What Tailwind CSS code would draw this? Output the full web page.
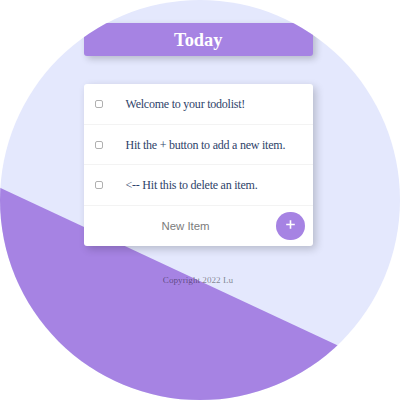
<!DOCTYPE html>
<html lang="en">
<head>
<meta charset="utf-8">
<title>Today</title>
<script src="https://cdn.jsdelivr.net/npm/@tailwindcss/browser@4"></script>
</head>
<body class="bg-white">
<main class="relative isolate flex h-[400px] w-[400px] flex-col items-start overflow-hidden rounded-full bg-[#e4e8fd] pt-[23px] pl-[84px] font-['Liberation_Serif',serif]">
  <div class="absolute inset-0 -z-10 bg-[#a683e3] [clip-path:polygon(0_187.8px,400px_374.4px,400px_400px,0_400px)]"></div>
  <header class="flex h-[33px] w-[228.6px] items-center justify-center rounded-[3px] bg-[#a683e3] shadow-[3px_3px_7px_rgba(0,0,0,0.2)]">
    <h1 class="pt-px text-[18.4px] leading-[32px] font-bold text-white">Today</h1>
  </header>
  <section class="mt-7 flex h-[162px] w-[228.6px] flex-col rounded-[3px] bg-white text-[12px] tracking-[-0.23px] text-[#2e4369] shadow-[3px_3px_8px_rgba(0,0,0,0.2)]">
    <label class="flex h-[41px] items-center border-b border-[#f3f3f3] pl-[11px]"><span class="mr-[22.5px] size-2 rounded-[2px] border border-[#b0b0b0]"></span><span class="whitespace-nowrap">Welcome to your todolist!</span></label>
    <label class="flex h-[40px] items-center border-b border-[#f3f3f3] pl-[11px]"><span class="mr-[22.5px] size-2 rounded-[2px] border border-[#b0b0b0]"></span><span class="pt-px whitespace-nowrap">Hit the + button to add a new item.</span></label>
    <label class="flex h-[41px] items-center border-b border-[#f3f3f3] pl-[11px]"><span class="mr-[22.5px] size-2 rounded-[2px] border border-[#b0b0b0]"></span><span class="whitespace-nowrap">&lt;-- Hit this to delete an item.</span></label>
    <div class="flex flex-1 items-center pr-[8px]">
      <span class="flex-1 pt-0.5 pl-[11px] text-center font-['Liberation_Sans',sans-serif] text-[11.4px] tracking-normal text-[#7b7b7b]">New Item</span>
      <button class="flex size-[28.5px] items-center justify-center rounded-full bg-[#a683e3]" aria-label="Add"><svg class="mb-[3px] size-[9px]" viewBox="0 0 9 9" fill="none" stroke="white" stroke-width="1.6"><path d="M4.5 0.2V8.8M0.2 4.5H8.8"/></svg></button>
    </div>
  </section>
  <footer class="mt-[28px] w-[228px] text-center text-[9.2px] leading-[12px] text-black/45">Copyright 2022 Lu</footer>
</main>
</body>
</html>
